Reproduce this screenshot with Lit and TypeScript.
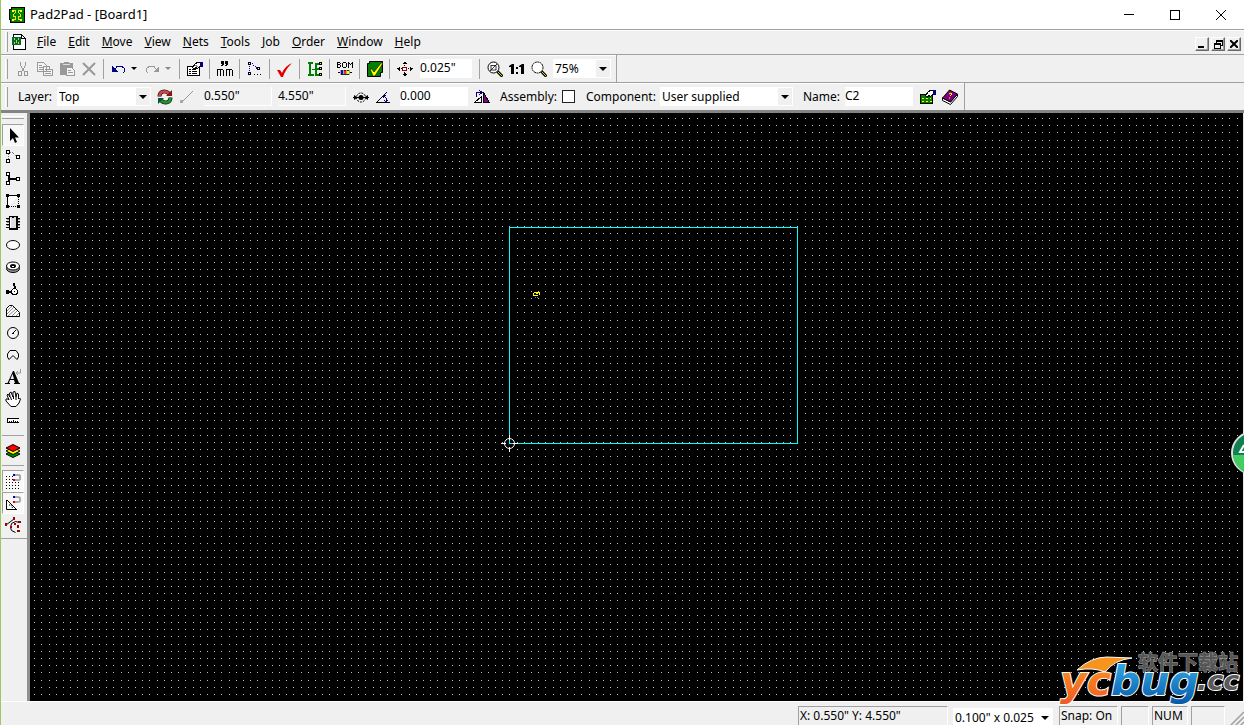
import { LitElement, html, svg, css, TemplateResult } from "lit";
import { customElement, property } from "lit/decorators.js";

const ICONS: Record<string, TemplateResult> = {
  app: svg`<path fill="#000" d="M0 2h2V0h14v16H1v-3H0z"/><path fill="#008000" d="M1 3h2V1h12v14H2v-3H1z"/><path fill="none" stroke="#ffe000" d="M4.500 3.500h2v2l-2 2v2h2v3h-2M11.500 3.500h-2v2l2 2v2h-2v3h2"/><path fill="#ff2" d="M3 3h2v2H3zM11 3h2v2h-2zM3 12h2v2H3zM11 12h2v2h-2z"/>`,
  doc: svg`<path fill="#fff" stroke="#000" d="M1.500 .5h8l4 4v11h-12z"/><path fill="none" stroke="#000" d="M9.500 .5v4h4"/><path fill="#063" d="M0 3h9v8H0z"/><path stroke="#cc3" d="M2.500 4v2M4.500 6v3M6.500 4v2M2.500 8v2M6.500 8v2"/>`,
  cut: svg`<g fill="none" stroke="#999"><path d="M5.500 1v3l2 4 2 3M10.500 1v3l-2 4-2 3"/><path d="M3.500 10.500h3v4h-3zM9.500 10.500h3v4h-3z"/></g>`,
  copy: svg`<g fill="#f5f5f5" stroke="#999"><path d="M.5 1.500h6l3 3v6h-9zM6.500 5.500h6l3 3v6h-9z"/><path d="M2 4.500h3M2 6.500h4M2 8.500h4M8 8.500h4M8 10.500h6M8 12.500h6M12.500 5.500v3h3"/></g>`,
  paste: svg`<path fill="#999" d="M1 2h4V1h5v1h4v12H1z"/><path fill="#ddd" d="M4 3h7v1H4z"/><path fill="#f5f5f5" stroke="#999" d="M7.500 6.500h5l3 3v5h-8z"/><path stroke="#999" d="M9 9.500h3M9 11.500h5"/>`,
  del: svg`<path fill="none" stroke="#999" stroke-width="2" d="M2 2l6 6 6 6M14 2L8 8l-6 6"/>`,
  undo: svg`<path fill="#000080" d="M1 5v6h6z"/><path fill="none" stroke="#000080" d="M4 8l2-2.500h5l2.500 2v3l-2 2"/>`,
  redo: svg`<path fill="#999" d="M14 5v6H8z"/><path fill="none" stroke="#999" d="M11 8L9 5.500H4l-2.500 2v3l2 2"/>`,
  props: svg`<path fill="#fff" stroke="#000" d="M.5 5.500h12v9H.5z"/><path stroke="#000" d="M2 8.500h2M5 8.500h4M2 10.500h2M5 10.500h5M2 12.500h2M5 12.500h5"/><path fill="#fff" stroke="#000" d="M5.500 6.500l3-4 2-1h3v4l-2 1-1 1-2-1-1 2z"/><path stroke="#888" d="M8 4.500l3 1"/><path fill="#000080" d="M13 1h3v5h-3z"/>`,
  mm: svg`<path fill="#000" d="M4 0h3v4H6v1H4V4h1V3H4zM8 0h3v4h-1v1H8V4h1V3H8z"/><path fill="#000" d="M0 8h6v1h1v6H6V9H4v6H3V9H1v6H0zM9 8h6v1h1v6h-1V9h-2v6h-1V9h-2v6H9z"/>`,
  nets: svg`<path fill="#fff" stroke="#000" d="M1.500 1.500h2v2h-2zM1.500 11.500h2v2h-2zM10.500 6.500h2v2h-2z"/><path stroke="#00f" stroke-dasharray="1 1" fill="none" d="M2.500 5v6M5 2.500l5 5"/><path fill="#000" d="M7 13h1v1H7zM10 13h1v1h-1zM13 13h1v1h-1z"/>`,
  check: svg`<path fill="#e00000" d="M0 9h3l2 3Q8 5 15 2 8 9 6 16H4z"/>`,
  tree: svg`<path fill="#008000" d="M1 1h5v2H4v10h3v2H1v-2h1V3H1zM8 2h5v2h-3v3h3v2h-3v4h3v2H8z"/><path fill="#ff0" stroke="#000" d="M12.500 1.500h2v2h-2zM12.500 6.500h2v2h-2zM12.500 12.500h2v2h-2z"/><path stroke="#008000" d="M5 8.500h3"/>`,
  bom: svg`<path fill="#000" fill-rule="evenodd" d="M0 1h3v1h1v1H3v1h1v2H3v1H0zM1 2v1h2V2zM1 4v2h2V4zM6 1h3v1h1v4H9v1H6V6H5V2h1zM6 2v4h3V2zM11 1h1v1h1v1h1V2h1V1h1v6h-1V3h-1v1h-1V3h-1v4h-1z"/><path fill="#000" d="M1 11h2v1H1zM13 11h2v1h-2z"/><path fill="#aa9" d="M3 9h10v5H3z"/><path fill="#222" d="M4 9h2v1H4zM7 9h2v1H7zM10 9h2v1h-2zM4 13h8v1H4z"/><path fill="#00f" d="M4 10h2v3H4z"/><path fill="#f22" d="M7 10h2v3H7z"/><path fill="#ff0" d="M10 10h2v3h-2z"/>`,
  boardok: svg`<path fill="#008000" stroke="#000" d="M.5 2.500h2v-2h13v11h-2v4H.5z"/><path fill="#ff0" stroke="#000" stroke-width=".6" d="M3 8h2l2 3 7-9h2L8 15H6z"/>`,
  move: svg`<path fill="#000" d="M7 1h2v1H7zM6 2h4v1H6zM7 13h2v-1H7zM7 14h2v1H7zM6 13h4v1H6zM1 7h1v2H1zM2 6h1v4H2zM14 7h1v2h-1zM13 6h1v4h-1zM0 7h1v1H0zM15 7h1v1h-1zM7 4h1v1H7zM7 11h1v1H7zM4 7h1v1H4zM11 7h1v1h-1z"/><path fill="#fff" stroke="#900" d="M5.500 6.500h4v3h-4z"/>`,
  zoomfit: svg`<circle cx="6.500" cy="6.500" r="5.500" fill="#fff" stroke="#000"/><path fill="none" stroke="#000" stroke-width=".8" d="M3 10l7-7M4 4.500h5V9M4 4v5h5"/><path stroke="#000" stroke-width="3" d="M10.500 10.500l5 5"/><path stroke="#dd0" d="M11 11l4 4"/>`,
  one: svg`<path fill="#000" d="M0 5l3-2h2v10H2V6H0zM7 6h2v2H7zM7 11h2v2H7zM10 5l3-2h2v10h-3V6h-2z"/>`,
  zoom: svg`<circle cx="6.500" cy="6.500" r="5.500" fill="#fff" stroke="#000" stroke-dasharray="2 .5"/><path stroke="#000" stroke-width="3" d="M10.500 10.500l5 5"/><path stroke="#dd0" d="M11 11l4 4"/>`,
  cycle: svg`<path fill="none" stroke="#222" stroke-width="4" d="M2.500 7.500C2.500 1.500 9 1.500 12 4.500M13.500 8.500c0 6-6.500 6-9.500 3"/><path fill="none" stroke="#d44" stroke-width="2.500" d="M2.500 7.500C2.500 1.500 9 1.500 12 4.500"/><path fill="none" stroke="#1a9a2a" stroke-width="2.500" d="M13.500 8.500c0 6-6.500 6-9.500 3"/><path fill="#811" d="M15 1v6H9z"/><path fill="#053" d="M1 15V9h6z"/>`,
  line: svg`<path stroke="#999" d="M3 13L14 2"/><path fill="#aaa" d="M1 11h3v3H1z"/>`,
  center: svg`<circle cx="8" cy="8.500" r="4.500" fill="none" stroke="#000" stroke-dasharray="2 1"/><circle cx="8" cy="8.500" r="2.500"/><path stroke="#000" d="M0 8.500h16"/><path fill="#000" d="M1 6l4 2.500L1 11zM15 6l-4 2.500 4 2.500z"/>`,
  angle: svg`<path fill="none" stroke="#000" d="M12 3L1.500 13.500H15"/><path fill="none" stroke="#000080" d="M8 6l3 3 1 4M8 9V6h3M9 11l2 2 2-2"/>`,
  flip: svg`<path fill="#fff" stroke="#000" d="M.5 13.500h7v-6z"/><path fill="#800080" stroke="#000" d="M9.500 3.500v10h6z"/><path fill="none" stroke="#000080" d="M2.500 8V3.500H7M5 1l3 2.500L5 6"/>`,
  compprops: svg`<path fill="#008000" stroke="#000" d="M.5 5.500h12v9H.5z"/><path fill="#ff0" d="M2 9h2v1H2zM6 9h2v1H6zM10 9h1v1h-1zM2 12h2v1H2zM6 12h2v1H6zM10 12h2v1h-2z"/><path fill="#fff" stroke="#000" d="M5.500 6.500l3-4 2-1h3v4l-2 1-1 1-2-1-1 2z"/><path fill="#000080" d="M13 1h3v5h-3z"/>`,
  book: svg`<path fill="#fff" stroke="#000" d="M.5 9v2.500l8 4 7-8V5l-7 8z"/><path fill="#800080" stroke="#000" d="M.5 9l7-8 8 4-7 8z"/><path fill="none" stroke="#ff0" d="M7 5l2-1 1 1-2 2M7 9h1"/>`,
  pointer: svg`<path fill="#000" d="M5 1v13l3-3 2 5 2-1-2-4.500h4z"/>`,
  route: svg`<path fill="#fff" stroke="#000" d="M1.500 1.500h3v3h-3zM1.500 10.500h3v3h-3zM11.500 6.500h3v3h-3z"/><path fill="none" stroke="#777" stroke-dasharray="1 1" d="M3.500 5v5M5 3.500h3l3 4"/>`,
  trace: svg`<path fill="#000" d="M3 4h2v3h7v2H5v3H3z"/><path fill="#fff" stroke="#000" d="M1.500 1.500h3v3h-3zM1.500 10.500h3v3h-3zM11.500 6.500h3v3h-3z"/>`,
  rect: svg`<path fill="#fff" stroke="#000" d="M2.500 13.500v-11h11"/><path fill="none" stroke="#000" stroke-dasharray="1 1" d="M13.500 2v12M2 13.500h12"/><path fill="#000" d="M1 1h3v3H1zM12 1h3v3h-3zM1 12h3v3H1zM12 12h3v3h-3z"/>`,
  chip: svg`<path stroke="#000" d="M1 3.500h3M1 6.500h3M1 9.500h3M1 12.500h3M12 3.500h3M12 6.500h3M12 9.500h3M12 12.500h3"/><path stroke="#888" d="M2 4.500h2M2 7.500h2M2 10.500h2M12 4.500h3M12 7.500h3M12 10.500h3"/><path fill="#000" d="M4 1h9v14H4z"/><path fill="#ddd" d="M5 2h2v1h2V2h2v11H5z"/><path fill="#fff" d="M5 3h1v10H5z"/>`,
  pad: svg`<ellipse cx="8" cy="8" rx="6.500" ry="4.500" fill="#fff" stroke="#000"/>`,
  via: svg`<ellipse cx="8" cy="9.500" rx="6.500" ry="4" fill="#999" stroke="#000"/><ellipse cx="8" cy="7" rx="6.500" ry="4" fill="#fff" stroke="#000"/><ellipse cx="8" cy="7" rx="3" ry="2" fill="#000"/><path fill="#fff" d="M7 7h2v1H7z"/>`,
  split: svg`<path fill="#000" d="M1 9h3v1h3v2H4v1H1zM8 2h2v3h1v3H9V5H8z"/><circle cx="9.500" cy="10.500" r="3" fill="#fff" stroke="#000"/><path fill="#000" d="M9 10h1v1H9z"/>`,
  area: svg`<path fill="#fff" d="M1.500 13.500v-8l3-3h3l7 7v4z"/><path stroke="#888" d="M2 8l5-5M2 11l7-7M3 13l8-7M7 13l5-5M11 13l3-3"/><path fill="none" stroke="#000" d="M1.500 13.500v-8l3-3h3l7 7v4z"/>`,
  circle: svg`<circle cx="8" cy="8" r="5.500" fill="#f5f5f5" stroke="#000"/><path stroke="#000" d="M8 8l3-3M7 8.500h2"/>`,
  arc: svg`<path fill="#f5f5f5" stroke="#000" d="M4 12.500L2.500 10V7L5 3.500h6L13.500 7v3L12 12.500l-4-4z"/>`,
  text: svg`<path fill="#000" fill-rule="evenodd" d="M0 15h5v-1H4l1-3h4l1 3H9v1h6v-1h-1L9 2H8L2.500 14H0zM5.500 10l2-5L9 10z"/><path fill="none" stroke="#999" d="M15.500 0v4H11M13 2l-2 2 2 2"/>`,
  hand: svg`<path fill="#fff" stroke="#000" d="M6 15.500L1 10V8h2l1 1-2-5 1-1 2 3L4.500 2 6 1l2 5V1l2-.5 1 5.500 1-4 1.500 1v5l1-1 1 1-1.500 4-3 3.500z"/><path stroke="#000" d="M5.500 6l1 3M8.500 5v3M11 6v3"/>`,
  ruler: svg`<path fill="#fff" d="M2 6h12v3H2z"/><path fill="#000" d="M2 5h12v1H2zM2 9h12v1H2zM2 6h1v3H2zM4 8h1v1H4zM6 8h1v1H6zM8 7h1v2H8zM10 8h1v1h-1zM12 8h1v1h-1z"/>`,
  layers: svg`<path fill="#008000" stroke="#000" d="M1 11l7-4 7 4-7 3.500z"/><path fill="#ff0" stroke="#000" d="M1 8l7-4 7 4-7 3.500z"/><path fill="#f00" stroke="#000" d="M1 5l7-3.500L15 5 8 8.500z"/>`,
  snapgrid: svg`<g stroke="#000" stroke-dasharray="1 2"><path d="M1 3.500h7M1 6.500h7M1 9.500h14M1 12.500h14M1 15.500h14"/></g><path fill="none" stroke="#aaa" stroke-width="2" d="M10 2h3c3 0 3 5 0 5h-3"/><path fill="#00c" d="M8 1h2v2H8z"/><path fill="#d00" d="M8 6h2v2H8z"/>`,
  snapangle: svg`<path fill="none" stroke="#000" d="M1.500 5v9.500H12M2 5l9 9"/><path fill="none" stroke="#000" stroke-dasharray="1 1" d="M4 10c3 0 4 2 3 4"/><path fill="none" stroke="#aaa" stroke-width="2" d="M10 2h3c3 0 3 5 0 5h-3"/><path fill="#00c" d="M8 1h2v2H8z"/><path fill="#d00" d="M8 6h2v2H8z"/>`,
  nodes: svg`<path fill="none" stroke="#000" d="M1 8l8-6M14.500 5.500l-4-1-4 2-1 4 1 3 4 2"/><path fill="#900" d="M0 6h2v3H0zM8 0h2v3H8zM13 4h3v2h-3zM9 6h2v2H9zM5 9h2v2H5zM12 8h2v3h-2zM12 13h3v2h-3z"/>`,
};

const SMOOTH = new Set(["cycle", "check", "pad", "via", "circle", "zoom", "zoomfit", "hand", "text", "del", "layers", "arc", "one", "book", "pointer", "boardok", "nodes", "center", "area", "snapangle"]);

@customElement("px-icon")
class PxIcon extends LitElement {
  @property() name = "";
  static styles = css`
    :host { display: block; width: 16px; height: 16px; flex: none; }
    svg { display: block; width: 16px; height: 16px; }
  `;
  render() {
    return html`<svg viewBox="0 0 16 16" aria-hidden="true" shape-rendering=${SMOOTH.has(this.name) ? "auto" : "crispEdges"}>${ICONS[this.name]}</svg>`;
  }
}

const icon = (name: string) => html`<px-icon name=${name}></px-icon>`;
const tool = (name: string, label: string, on = false) =>
  html`<button class="tool ${on ? "on" : ""}" aria-label=${label} title=${label}>${icon(name)}</button>`;
const sep = () => html`<span class="sep"></span>`;

const MENUS = ["File", "Edit", "Move", "View", "Nets", "Tools", "Job", "Order", "Window", "Help"];
const DRAW: [string, string][] = [
  ["pointer", "Select"], ["route", "Route"], ["trace", "Trace"], ["rect", "Rectangle"],
  ["chip", "Component"], ["pad", "Pad"], ["via", "Via"], ["split", "Split"], ["area", "Area"],
  ["circle", "Circle"], ["arc", "Arc"], ["text", "Text"], ["hand", "Pan"], ["ruler", "Measure"],
];
/* Five grid dots for every 36px tile. */
const DOT_X = [5, 13, 20, 27, 34];
const DOT_Y = [3, 10, 17, 24, 32];

@customElement("app-root")
class AppRoot extends LitElement {
  static styles = css`
    :host {
      display: flex; flex-direction: column; box-sizing: border-box; height: 100vh; overflow: hidden;
      border-left: 1px solid #9acb5c; background: #f0f0f0; color: #000;
      font: 12px/16px "Noto Sans", "Open Sans", sans-serif;
    }
    * { box-sizing: border-box; }
    button, input, select { font: inherit; color: inherit; margin: 0; padding: 0; border: 0; border-radius: 0; background: none; }
    .title { display: flex; align-items: center; height: 29px; background: #fff; padding-left: 8px; gap: 5px; flex: none; }
    .title h1 { font: inherit; font-size: 13px; margin: 0; flex: 1; padding-bottom: 1px; }
    .title .win { width: 46px; height: 28px; display: grid; place-items: center; }
    .wins { display: flex; }
    .menubar { display: flex; align-items: center; height: 25px; border-top: 1px solid #a0a0a0; box-shadow: inset 0 1px #fff; flex: none; padding-left: 4px; }
    .menus { display: flex; flex: 1; gap: 12px; margin-left: 9px; }
    .grip { width: 3px; height: 20px; border-right: 1px solid #a0a0a0; border-left: 1px solid #fff; flex: none; }
    .doc { margin-left: 4px; }
    .mdi { display: flex; gap: 2px; padding: 4px 3px 0 0; }
    .mdi button { width: 14px; height: 14px; display: grid; place-items: center; background: #f0f0f0; border: 1px solid; border-color: #fff #696969 #696969 #fff; box-shadow: inset -1px -1px #a0a0a0; }
    .bar { display: flex; align-items: center; height: 28px; border-top: 1px solid #a0a0a0; flex: none; }
    .band { display: flex; align-items: center; height: 27px; padding-left: 4px; border-right: 1px solid #a0a0a0; box-shadow: inset 0 1px #fff; }
    .one .band { padding-right: 5px; }
    .band .grip { margin-right: 4px; }
    .tool { width: 22px; height: 22px; display: grid; place-items: center; flex: none; }
    .tool.on { border: 1px solid; border-color: #a0a0a0 #fff #fff #a0a0a0; background: #f8f8f8; }
    .drop { width: 12px; height: 22px; display: grid; align-items: center; padding-left: 1px; }
    .drop i, .combo i { border: 3px solid transparent; border-top-color: #000; border-bottom: 0; width: 0; height: 0; }
    .drop.off i { border-top-color: #888; }
    .sep { width: 8px; height: 20px; flex: none; background: linear-gradient(#a0a0a0, #a0a0a0) 3px 0 / 1px 100% no-repeat; }
    .field { background: #fff; height: 19px; line-height: 16px; padding-bottom: 3px; }
    .field.off { background: #f2f2f2; box-shadow: inset -1px -1px #fff; }
    .combo { position: relative; display: flex; align-items: center; background: #fff; height: 19px; flex: none; }
    .combo select { appearance: none; width: 100%; height: 19px; padding-left: 2px; }
    .combo i { position: absolute; z-index: 1; right: 4px; top: 8px; border-width: 4px; border-bottom: 0; pointer-events: none; }
    .combo::after { content: ""; position: absolute; right: 1px; top: 1px; width: 14px; height: 17px; background: #f0f0f0; pointer-events: none; }
    .combo.plain::after { display: none; }
    .value { width: 68px; flex: none; }
    .step { width: 52px; margin: 0 4px; }
    .zoomsel { width: 58px; margin-left: 3px; }
    .two .grip { margin-right: 10px; }
    .two .band { padding-right: 3px; }
    .lab { width: 39px; flex: none; }
    .layer { width: 94px; margin-right: 3px; }
    .x { margin: 0 6px 0 6px; }
    .y { margin-right: 4px; }
    .rot { margin: 0 3px 0 6px; }
    .asm { width: 62px; margin-left: 7px; flex: none; }
    .cmp { width: 74px; margin-left: 11px; flex: none; }
    .supplied { width: 133px; }
    .nm { width: 42px; margin-left: 10px; flex: none; }
    .name { margin-right: 4px; }
    .box { appearance: none; width: 13px; height: 13px; border: 1px solid #222; background: #fff; flex: none; }
    .main { display: flex; flex: 1; min-height: 0; border-top: 3px solid #848484; }
    .side { width: 29px; flex: none; border-right: 3px solid #909090; display: flex; flex-direction: column; padding-top: 3px; }
    .side .hgrip { height: 3px; margin: 0 3px 5px 1px; border-bottom: 1px solid #a0a0a0; border-top: 1px solid #fff; flex: none; }
    .side .tool { margin-left: 1px; }
    .hsep { height: 8px; margin: 0 3px 0 1px; flex: none; background: linear-gradient(#a0a0a0, #a0a0a0) 0 3px / 100% 1px no-repeat; }
    .end { height: 3px; border-bottom: 1px solid #a0a0a0; }
    .board { position: relative; flex: 1; min-width: 0; background: #000; border-right: 1px solid #e8e8e8; }
    .sheet { display: block; width: 100%; height: 100%; }
    .badge { position: absolute; right: -1px; top: 318px; width: 13px; height: 44px; }
    .mark { position: absolute; right: 0; bottom: -6px; width: 184px; height: 54px; z-index: 2; overflow: visible; }
    .brand { font-family: "DejaVu Sans", sans-serif; font-weight: 700; font-style: italic; stroke: #fff; stroke-width: 2px; paint-order: stroke; }
    .tagline { font: 700 20px "Noto Sans CJK SC", sans-serif; fill: #555; stroke: #999; stroke-width: 1px; paint-order: stroke; }
    .status { display: flex; height: 24px; flex: none; border-top: 1px solid #fff; padding-top: 4px; justify-content: flex-end; gap: 3px; }
    .cell { border: 1px solid; border-color: #a0a0a0 #fff #fff #a0a0a0; height: 22px; padding: 1px 0 0 1px; white-space: nowrap; flex: none; }
    .status .combo { margin: 2px 3px 0 2px; width: 100px; }
    .xy { width: 150px; } .snap { width: 59px; } .c1 { width: 28px; } .num { width: 36px; } .c2 { width: 34px; }
    .size { width: 16px; height: 20px; flex: none; }
  `;

  render() {
    return html`
      <header class="title">
        ${icon("app")}
        <h1>Pad2Pad - [Board1]</h1>
        <div class="wins">
          <button class="win" aria-label="Minimize"><svg width="10" height="10" shape-rendering="crispEdges"><path stroke="#000" d="M0 4.500h10"/></svg></button>
          <button class="win" aria-label="Maximize"><svg width="10" height="10" shape-rendering="crispEdges"><path fill="none" stroke="#000" d="M.5 .5h9v9h-9z"/></svg></button>
          <button class="win" aria-label="Close"><svg width="10" height="10"><path stroke="#000" d="M0 0l10 10M10 0L0 10"/></svg></button>
        </div>
      </header>
      <nav class="menubar">
        <span class="grip"></span>
        <span class="doc">${icon("doc")}</span>
        <div class="menus">${MENUS.map((m) => html`<button><u>${m[0]}</u>${m.slice(1)}</button>`)}</div>
        <div class="mdi">
          <button aria-label="Minimize board"><svg width="8" height="8"><path d="M0 6h6v2H0z"/></svg></button>
          <button aria-label="Restore board"><svg width="9" height="9" shape-rendering="crispEdges"><path fill="none" stroke="#000" d="M2.500 3V.5h6v5H7M2 1.500h7M.5 3.500h6v5h-6zM0 4.500h7"/></svg></button>
          <button aria-label="Close board"><svg width="8" height="8"><path stroke="#000" stroke-width="2" d="M0 0l8 8M8 0L0 8"/></svg></button>
        </div>
      </nav>
      <div class="bar one"><div class="band">
        <span class="grip"></span>
        ${tool("cut", "Cut")}${tool("copy", "Copy")}${tool("paste", "Paste")}${tool("del", "Delete")}${sep()}
        ${tool("undo", "Undo")}<button class="drop" aria-label="Undo list"><i></i></button>
        ${tool("redo", "Redo")}<button class="drop off" aria-label="Redo list"><i></i></button>${sep()}
        ${tool("props", "Properties")}${sep()}${tool("mm", "Units")}${sep()}${tool("nets", "Nets")}${sep()}
        ${tool("check", "Check")}${sep()}${tool("tree", "Net list")}${sep()}${tool("bom", "Bill of materials")}${sep()}
        ${tool("boardok", "Order board")}${sep()}${tool("move", "Nudge")}
        <input class="field step" aria-label="Nudge distance" value='0.025"' />${sep()}
        ${tool("zoomfit", "Zoom to fit")}${tool("one", "Actual size")}${tool("zoom", "Zoom")}
        <span class="combo zoomsel"><select aria-label="Zoom level"><option>75%</option></select><i></i></span>
      </div></div>
      <div class="bar two"><div class="band">
        <span class="grip"></span>
        <label class="lab" for="layer">Layer:</label>
        <span class="combo layer"><select id="layer"><option>Top</option></select><i></i></span>
        ${tool("cycle", "Swap layer")}${tool("line", "Line")}
        <input class="field off value x" aria-label="X" value='0.550"' />
        <input class="field off value y" aria-label="Y" value='4.550"' />
        ${tool("center", "Centre")}${tool("angle", "Angle")}
        <input class="field value rot" aria-label="Rotation" value="0.000" />
        ${tool("flip", "Flip")}
        <label class="asm" for="asm">Assembly:</label>
        <input class="box" id="asm" type="checkbox" />
        <label class="cmp" for="comp">Component:</label>
        <span class="combo supplied"><select id="comp"><option>User supplied</option></select><i></i></span>
        <label class="nm" for="name">Name:</label>
        <input class="field value name" id="name" value="C2" />
        ${tool("compprops", "Component properties")}${tool("book", "Library")}
      </div></div>
      <main class="main">
        <aside class="side">
          <span class="hgrip"></span>
          ${DRAW.map(([n, l], i) => tool(n, l, i === 0))}
          <span class="hsep"></span>
          ${tool("layers", "Layers")}
          <span class="hsep"></span>
          ${tool("snapgrid", "Snap to grid", true)}${tool("snapangle", "Snap to angle", true)}${tool("nodes", "Edit nodes")}
          <span class="end"></span>
        </aside>
        <section class="board">
          <svg class="sheet" shape-rendering="crispEdges">
            <defs><pattern id="grid" x="-30" y="-113" width="36" height="36" patternUnits="userSpaceOnUse">
              ${DOT_X.map((x) => DOT_Y.map((y) => svg`<rect x=${x} y=${y} width="1" height="1" fill="#c0c0c0"/>`))}
            </pattern></defs>
            <rect width="100%" height="100%" fill="url(#grid)"/>
            <rect x="479.500" y="114.500" width="288" height="216" fill="none" stroke="#0ff"/>
            <circle cx="479.500" cy="330.500" r="5" fill="none" stroke="#fff" shape-rendering="auto"/>
            <path stroke="#fff" d="M471 330.500h5M483 330.500h5M479.500 322v5M479.500 334v5"/>
            <path fill="#ff0" d="M504 179h4v1h-4zM503 180h1v3h-1zM504 182h4v1h-4zM506 180h2v1h-2zM508 179h2v1h-2zM509 180h1v2h-1z"/>
            <path fill="#877" d="M505 184h1v1h-1zM507 184h1v1h-1z"/>
          </svg>
          <svg class="badge" viewBox="0 0 13 44">
            <circle cx="22" cy="22" r="21" fill="#118050" stroke="#ddd" stroke-width="2"/>
            <path fill="#43cc62" d="M2 24h11v17Q3 35 2 24z"/>
            <path fill="none" stroke="#fff" stroke-width="2" d="M13 14l-4 7h4"/>
          </svg>
          <svg class="mark" viewBox="0 0 184 54">
            <defs>
              <linearGradient id="or" x2="0" y2="1"><stop offset="0" stop-color="#ff9a1e"/><stop offset="1" stop-color="#ee5a24"/></linearGradient>
              <linearGradient id="bl" x2="0" y2="1"><stop offset="0" stop-color="#35b5ee"/><stop offset="1" stop-color="#0858a8"/></linearGradient>
            </defs>
            <text class="tagline" x="79" y="17">软件下载站</text>
            <path fill="#f7941e" stroke="#fff" d="M18 17Q32 4 48 4l25 1q-18 2-27 14-12-5-28-2z"/>
            <g class="brand">
              <text x="1" y="42" font-size="41" fill="url(#or)">yc</text>
              <text x="52" y="42" font-size="41" fill="url(#bl)">bug</text>
              <text x="138" y="37" font-size="27" fill="#58595b">.cc</text>
            </g>
          </svg>
        </section>
      </main>
      <footer class="status">
        <span class="cell xy">X: 0.550" Y: 4.550"</span>
        <span class="combo plain"><select aria-label="Grid"><option>0.100" x 0.025</option></select><i></i></span>
        <span class="cell snap">Snap: On</span>
        <span class="cell c1"></span>
        <span class="cell num">NUM</span>
        <span class="cell c2"></span>
        <svg class="size" viewBox="0 0 16 20"><path stroke="#a0a0a0" stroke-width="1.500" d="M2 20L16 6M7 20l9-9M12 20l4-4"/></svg>
      </footer>
    `;
  }
}
